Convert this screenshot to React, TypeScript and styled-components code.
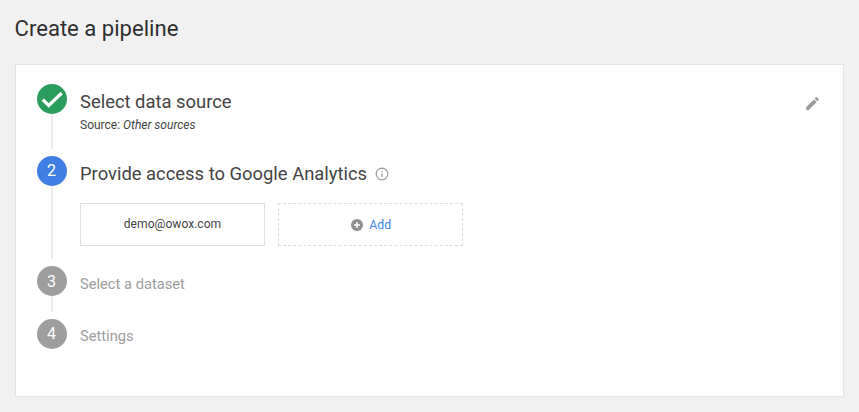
import styled, {createGlobalStyle} from "styled-components";

const GlobalStyle = createGlobalStyle`
  html, body {
    margin: 0;
    background: #f1f1f1;
    font-family: Roboto, "Liberation Sans", sans-serif;
  }
`

const Page = styled.div`
  width: 859px;
  height: 412px;
  box-sizing: border-box;
  padding: 15px;
  overflow: hidden;
`

const Heading = styled.h1`
  margin: 0 0 22px -0.5px;
  font-size: 22.1px;
  font-weight: 400;
  line-height: 27px;
  color: #2f2f2f;
`

const Card = styled.div`
  position: relative;
  box-sizing: border-box;
  height: 333px;
  padding: 19px 21px 19px 20.5px;
  background: #fff;
  border: 1px solid #e4e4e4;
`

const EditButton = styled.button`
  position: absolute;
  top: 30px;
  right: 22px;
  width: 17px;
  height: 17px;
  padding: 0;
  border: none;
  background: none;
  display: flex;
`

const Step = styled.div<{$height: number}>`
  display: flex;
  gap: 13.5px;
  height: ${p => p.$height}px;
`

const Rail = styled.div`
  width: 30px;
  display: flex;
  flex-direction: column;
  align-items: center;
  padding-bottom: 7px;
  box-sizing: border-box;
`

const Connector = styled.div`
  flex: 1;
  width: 2px;
  margin-left: 1px;
  background: #ececec;
`

const Badge = styled.div<{$color: string}>`
  flex: none;
  width: 30px;
  height: 30px;
  border-radius: 50%;
  background: ${p => p.$color};
  color: #fff;
  font-size: 16px;
  display: flex;
  align-items: center;
  justify-content: center;
`

const Body = styled.div`
  flex: 1;
`

const ActiveTitle = styled.div`
  display: flex;
  align-items: center;
  gap: 8px;
  font-size: 18.4px;
  line-height: 22px;
  color: #444;
  padding-top: 7px;
`

const Source = styled.div`
  margin-top: 5px;
  font-size: 12px;
  line-height: 14px;
  color: #444;

  em {
    font-style: italic;
  }
`

const MutedTitle = styled.div`
  font-size: 14.7px;
  line-height: 18px;
  color: #9e9e9e;
  padding-top: 8.5px;
`

const Accounts = styled.div`
  display: flex;
  gap: 13px;
  margin-top: 18.5px;
`

const Account = styled.div`
  box-sizing: border-box;
  width: 185px;
  height: 43px;
  border: 1px solid #e0e0e0;
  display: flex;
  align-items: center;
  justify-content: center;
  font-size: 12.1px;
  color: #444;
  padding-bottom: 1px;
`

const AddAccount = styled.div`
  box-sizing: border-box;
  width: 185px;
  height: 43px;
  padding-left: 1px;
  border: 1px dashed #dcdcdc;
  display: flex;
  align-items: center;
  justify-content: center;
  gap: 6.5px;
  font-size: 12.3px;
  color: #4285e0;
`

export default function App() {
    return (
        <Page>
            <GlobalStyle/>
            <Heading>Create a pipeline</Heading>
            <Card>
                <EditButton aria-label="edit">
                    <svg width="17" height="17" viewBox="0 0 24 24" fill="#9b9b9b">
                        <path d="M3 17.25V21h3.75L17.81 9.94l-3.75-3.75L3 17.25zM20.71 7.04a1 1 0 0 0 0-1.41l-2.34-2.34a1 1 0 0 0-1.41 0l-1.83 1.83 3.75 3.75 1.83-1.83z"/>
                    </svg>
                </EditButton>

                <Step $height={71.5}>
                    <Rail>
                        <Badge $color="#2a9d5c">
                            <svg width="26" height="26" viewBox="0 0 24 24" fill="none" stroke="#fff" strokeWidth="3">
                                <path d="M3.5 12.5l5.5 5.5L21 6.5"/>
                            </svg>
                        </Badge>
                        <Connector/>
                    </Rail>
                    <Body>
                        <ActiveTitle>Select data source</ActiveTitle>
                        <Source>Source: <em>Other sources</em></Source>
                    </Body>
                </Step>

                <Step $height={110.5}>
                    <Rail>
                        <Badge $color="#3f7fe3">2</Badge>
                        <Connector/>
                    </Rail>
                    <Body>
                        <ActiveTitle>
                            Provide access to Google Analytics
                            <svg width="14" height="14" viewBox="0 0 14 14" fill="none">
                                <circle cx="7" cy="7" r="5.8" stroke="#9b9b9b" strokeWidth="1.2"/>
                                <path d="M7 6.2v3.8M7 4v1.2" stroke="#9b9b9b" strokeWidth="1.2"/>
                            </svg>
                        </ActiveTitle>
                        <Accounts>
                            <Account>demo@owox.com</Account>
                            <AddAccount>
                                <svg width="12" height="12" viewBox="0 0 12 12">
                                    <circle cx="6" cy="6" r="6" fill="#8f8f8f"/>
                                    <path d="M6 3v6M3 6h6" stroke="#fff" strokeWidth="1.5"/>
                                </svg>
                                Add
                            </AddAccount>
                        </Accounts>
                    </Body>
                </Step>

                <Step $height={52.5}>
                    <Rail>
                        <Badge $color="#9e9e9e">3</Badge>
                        <Connector/>
                    </Rail>
                    <Body>
                        <MutedTitle>Select a dataset</MutedTitle>
                    </Body>
                </Step>

                <Step $height={40}>
                    <Rail>
                        <Badge $color="#9e9e9e">4</Badge>
                    </Rail>
                    <Body>
                        <MutedTitle>Settings</MutedTitle>
                    </Body>
                </Step>
            </Card>
        </Page>
    );
}
